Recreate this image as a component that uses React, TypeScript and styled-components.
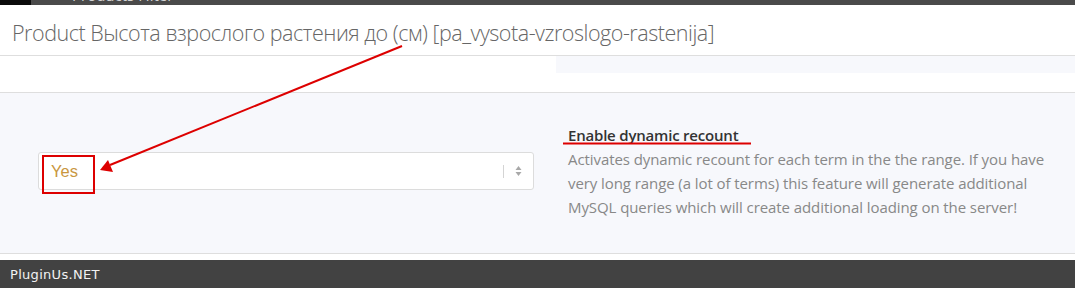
import React from "react";
import styled, { createGlobalStyle } from "styled-components";

const GlobalStyle = createGlobalStyle`
  html, body { margin: 0; padding: 0; background: #ffffff; overflow: hidden; }
  * { box-sizing: border-box; }
`;

const Page = styled.div`
  position: relative;
  width: 1075px;
  height: 288px;
  overflow: hidden;
  background: #ffffff;
  font-family: "Open Sans", "Noto Sans", sans-serif;
`;

const TopBar = styled.div`
  height: 5px;
  background: #4a4a4a;
  display: flex;
  overflow: hidden;
`;

const BlackTab = styled.div`
  width: 31px;
  background: #0b0b0b;
`;

const TopTitle = styled.div`
  margin-left: 41px;
  margin-top: -14px;
  font-size: 15px;
  line-height: 19px;
  color: #d4d4d4;
  white-space: nowrap;
`;

const Header = styled.div`
  height: 51px;
  padding: 13px 0 0 12px;
  border-bottom: 1px solid #dedede;
`;

const Title = styled.h1`
  margin: 0;
  font-family: "Open Sans", sans-serif;
  font-weight: 300;
  font-size: 21.5px;
  line-height: 29px;
  color: #666666;
  letter-spacing: -0.47px;
  white-space: nowrap;
`;

const SubRow = styled.div`
  height: 36px;
  display: grid;
  grid-template-columns: 556px 1fr;
`;

const SubTab = styled.div`
  height: 17px;
  background: #f7f8fc;
`;

const Section = styled.div`
  height: 162px;
  background: #f7f8fc;
  border-top: 1px solid #dedede;
  border-bottom: 1px solid #dedede;
  display: grid;
  grid-template-columns: 568px 1fr;
`;

const LeftCol = styled.div`
  padding: 59px 0 0 38px;
`;

const SelectBox = styled.div`
  width: 496px;
  height: 38px;
  background: #ffffff;
  border: 1px solid #dcdcdc;
  border-radius: 3px;
  display: flex;
  align-items: center;
  padding-left: 12px;
`;

const SelectValue = styled.span`
  flex: 1;
  font-family: "Liberation Sans", Arial, sans-serif;
  font-size: 16.5px;
  color: #c9973f;
`;

const Divider = styled.span`
  width: 1px;
  height: 13px;
  background: #d4d4d4;
`;

const ArrowsCell = styled.span`
  width: 29px;
  display: flex;
  justify-content: center;
  align-items: center;
`;

const RightCol = styled.div`
  padding: 32px 15px 0 0;
`;

const FieldHeading = styled.div`
  font-family: "Open Sans", sans-serif;
  font-weight: 600;
  font-size: 15px;
  line-height: 20px;
  color: #333333;
  letter-spacing: -0.2px;
`;

const FieldDesc = styled.p`
  margin: 2px 0 0;
  font-family: "Open Sans", sans-serif;
  font-size: 15px;
  line-height: 24px;
  color: #888888;
  letter-spacing: -0.08px;
`;

const Gap = styled.div`
  height: 6px;
`;

const Footer = styled.div`
  height: 28px;
  background: #424242;
  display: flex;
  align-items: center;
  padding-left: 10px;
`;

const Brand = styled.span`
  font-family: "DejaVu Sans", sans-serif;
  font-size: 13px;
  letter-spacing: 0.3px;
  color: #f2f2f2;
`;

const Overlay = styled.svg`
  position: absolute;
  left: 0;
  top: 0;
  pointer-events: none;
`;

export default function App() {
  return (
    <Page>
      <GlobalStyle />
      <TopBar>
        <BlackTab />
        <TopTitle>Products Filter</TopTitle>
      </TopBar>
      <Header>
        <Title>Product Высота взрослого растения до (см) [pa_vysota-vzroslogo-rastenija]</Title>
      </Header>
      <SubRow>
        <div />
        <SubTab />
      </SubRow>
      <Section>
        <LeftCol>
          <SelectBox>
            <SelectValue>Yes</SelectValue>
            <Divider />
            <ArrowsCell>
              <svg width="7" height="12" viewBox="0 0 7 12">
                <path d="M3.5 1 L6.5 5 L0.5 5 Z" fill="#a8a8a8" />
                <path d="M3.5 11 L6.5 7 L0.5 7 Z" fill="#a8a8a8" />
              </svg>
            </ArrowsCell>
          </SelectBox>
        </LeftCol>
        <RightCol>
          <FieldHeading>Enable dynamic recount</FieldHeading>
          <FieldDesc>
            Activates dynamic recount for each term in the the range. If you have very long range (a lot of terms)
            this feature will generate additional MySQL queries which will create additional loading on the server!
          </FieldDesc>
        </RightCol>
      </Section>
      <Gap />
      <Footer>
        <Brand>PluginUs.NET</Brand>
      </Footer>
      <Overlay width="1075" height="288" viewBox="0 0 1075 288">
        <line x1="402" y1="46" x2="110" y2="165" stroke="#dd0000" strokeWidth="2" />
        <path d="M100 170 L108 160 L113 172 Z" fill="#dd0000" />
        <rect x="43" y="156" width="51" height="37" fill="none" stroke="#dd0000" strokeWidth="2" />
        <line x1="563" y1="143.5" x2="751" y2="143.5" stroke="#dd0000" strokeWidth="2" />
      </Overlay>
    </Page>
  );
}
